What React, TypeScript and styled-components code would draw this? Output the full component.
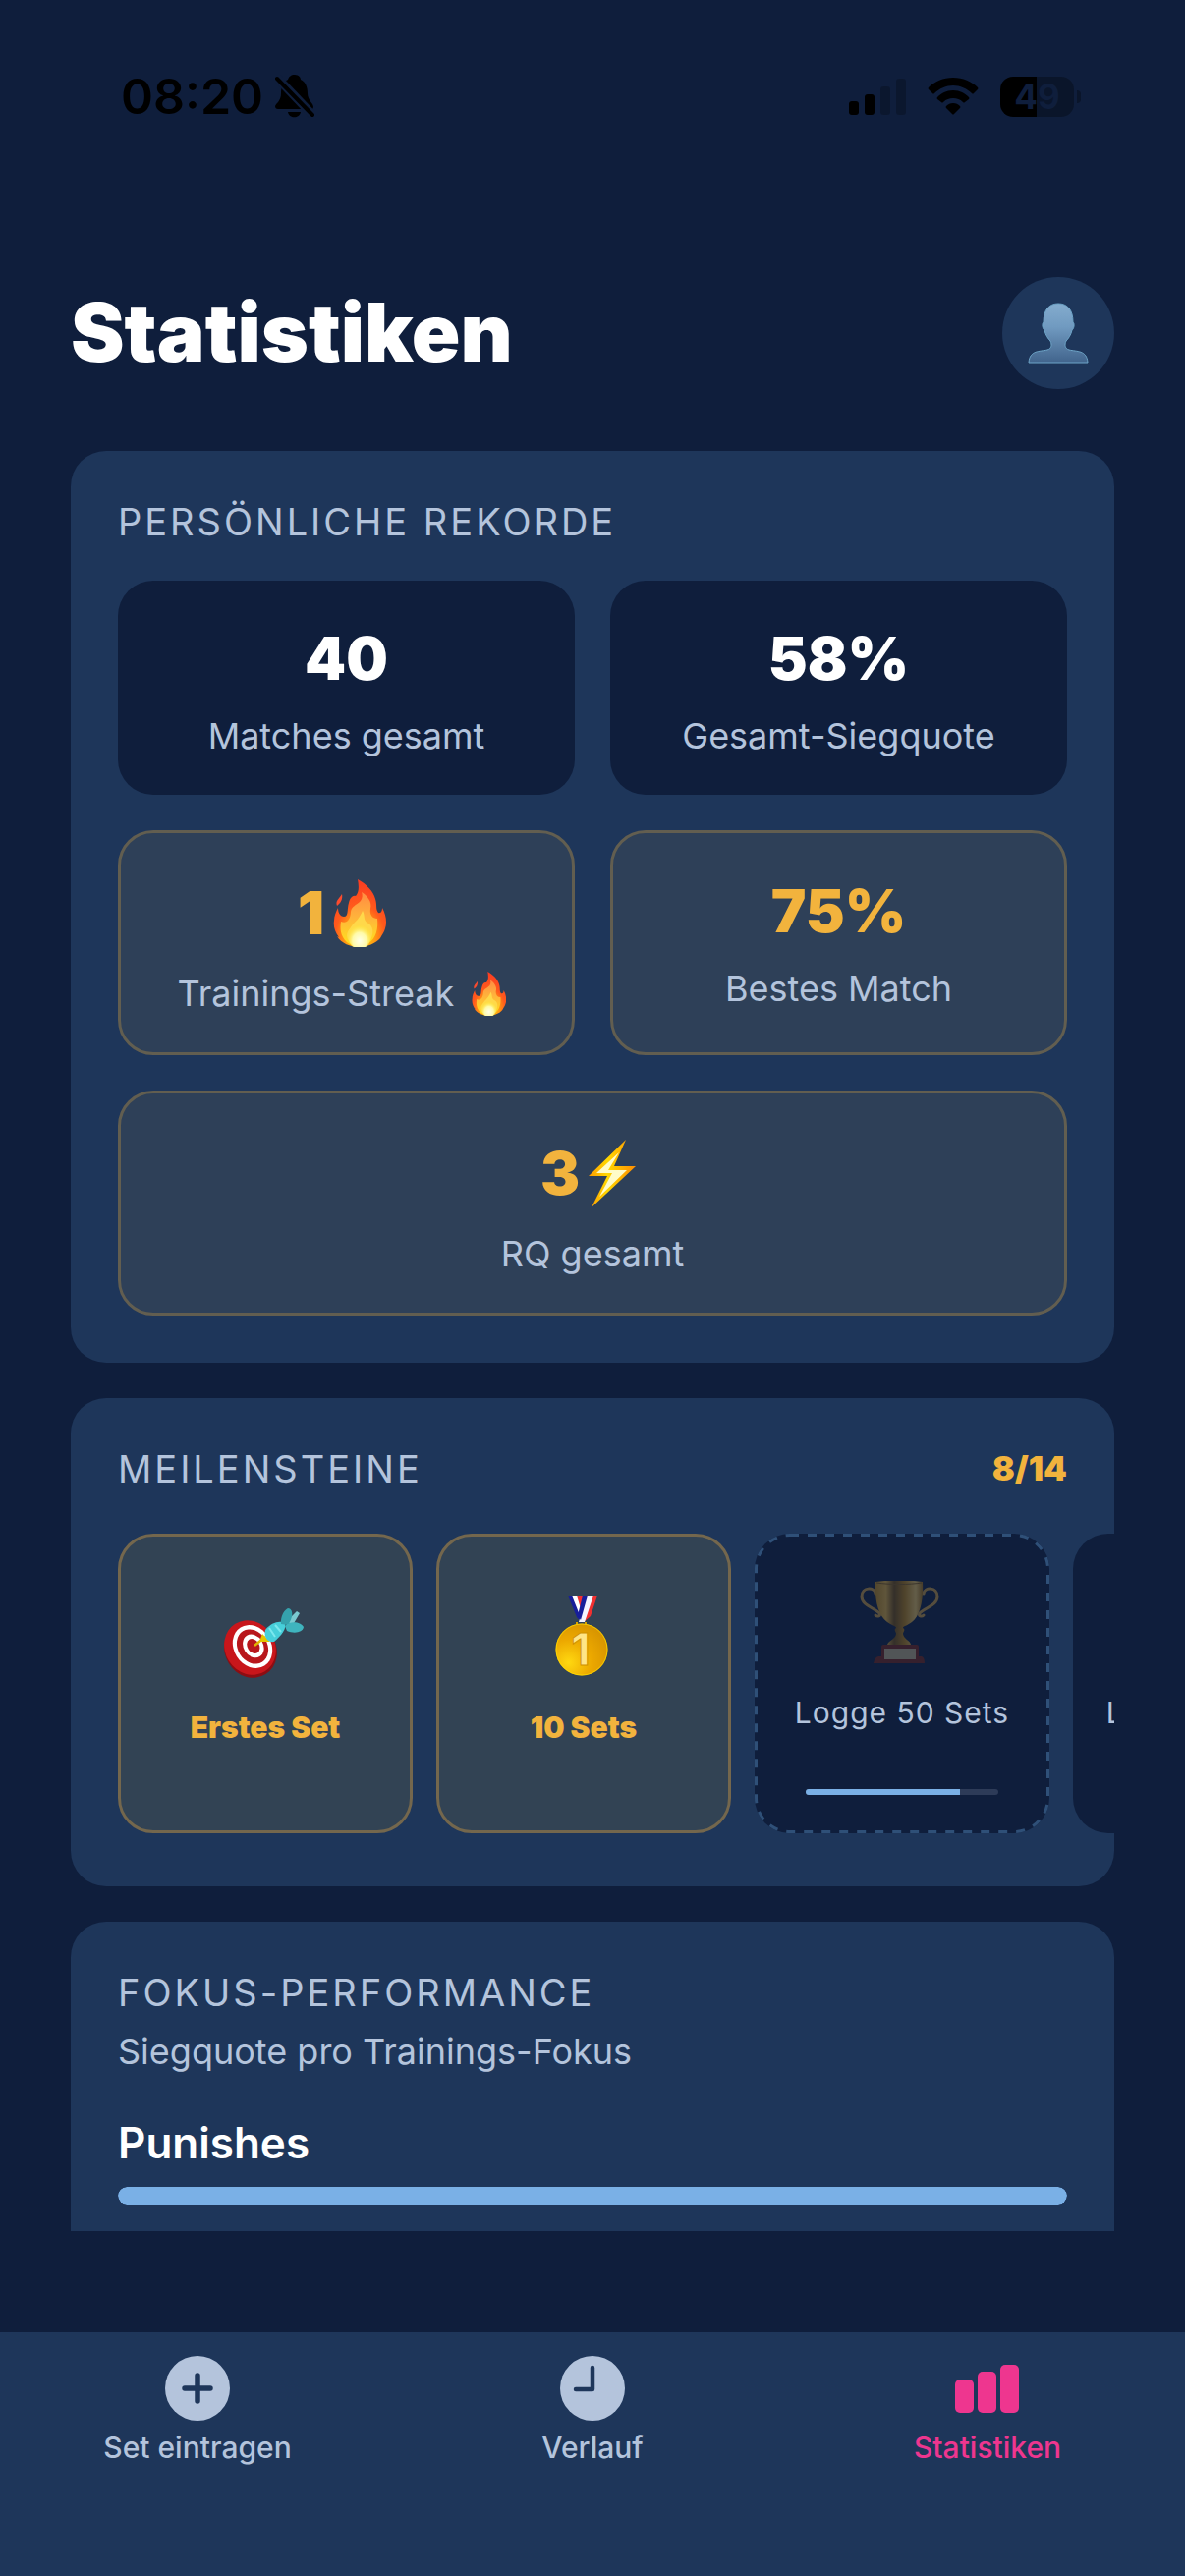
import * as React from "react";
import styled, { createGlobalStyle } from "styled-components";

const { useState } = React;

type TabId = "entry" | "history" | "stats";
type EmojiName = "flame" | "bolt" | "dart" | "medal" | "trophy";

interface RecordItem {
  value: string;
  label: string;
  valueEmoji?: EmojiName;
  labelEmoji?: EmojiName;
  highlight?: boolean;
  wide?: boolean;
}

interface Milestone {
  label: string;
  emoji: EmojiName;
  progress?: number;
  next?: boolean;
}

const records: RecordItem[] = [
  { value: "40", label: "Matches gesamt" },
  { value: "58%", label: "Gesamt-Siegquote" },
  {
    value: "1",
    label: "Trainings-Streak",
    valueEmoji: "flame",
    labelEmoji: "flame",
    highlight: true,
  },
  { value: "75%", label: "Bestes Match", highlight: true },
  {
    value: "3",
    label: "RQ gesamt",
    valueEmoji: "bolt",
    highlight: true,
    wide: true,
  },
];

const milestones: Milestone[] = [
  { label: "Erstes Set", emoji: "dart" },
  { label: "10 Sets", emoji: "medal" },
  { label: "Logge 50 Sets", emoji: "trophy", progress: 80, next: true },
  { label: "Logge 100 Sets", emoji: "trophy", progress: 40 },
];

const Flame: React.FC<{ height: number }> = ({ height }) => (
  <svg height={height} viewBox="0 0 54 69" aria-hidden="true">
    <defs>
      <radialGradient id="flameOuter" cx="0.5" cy="0.85" r="0.85">
        <stop offset="0" stopColor="#ffd21a" />
        <stop offset="0.32" stopColor="#ffa012" />
        <stop offset="0.56" stopColor="#ff5a1c" />
        <stop offset="1" stopColor="#fb3a22" />
      </radialGradient>
      <linearGradient id="flameInner" x1="0" y1="0" x2="0" y2="1">
        <stop offset="0" stopColor="#ff8a42" />
        <stop offset="0.45" stopColor="#ffb23c" />
        <stop offset="1" stopColor="#ffe21c" />
      </linearGradient>
      <radialGradient id="flameCore" cx="0.5" cy="0.7" r="0.6">
        <stop offset="0" stopColor="#ffffe8" />
        <stop offset="0.5" stopColor="#fffaa8" />
        <stop offset="1" stopColor="#ffe81a" stopOpacity="0" />
      </radialGradient>
    </defs>
    <path
      fill="url(#flameOuter)"
      d="M25 0C34 5 41 12 43 20C45 26 43 30 46 34C49 35 50 32 50 29C54 36 55 44 53 50C52 54 50 56 48 60C44 65 34 69 26 69C18 69 8 65 4 58L6 59C2 54 0 48 1 42C1 37 3 33 5 29C5 35 8 38 11 38C16 38 14 30 16 24C17 19 20 16 23 17C27 12 26 6 25 0Z"
    />
    <path fill="#fb4b2e" d="M9 15C10 20 8 24 4 27C2 22 6 20 9 15Z" />
    <path
      fill="url(#flameInner)"
      d="M29 13C35 17 40 23 38 30C37 36 40 40 45 40C46 50 44 60 36 65C30 69 20 69 14 64C7 57 7 50 8 43C14 46 18 40 18 33C19 27 23 27 28 22C30 19 30 16 29 13Z"
    />
    <path
      fill="#ffd84a"
      d="M30 32C33 37 30 42 36 45C43 49 41 61 34 66C28 69 20 68 16 63C11 55 17 51 20 46C24 42 27 39 30 32Z"
    />
    <ellipse cx="27" cy="57" rx="12" ry="14" fill="url(#flameCore)" />
  </svg>
);

const Bolt: React.FC<{ height: number }> = ({ height }) => (
  <svg height={height} viewBox="0 0 48 69" aria-hidden="true">
    <defs>
      <linearGradient id="boltEdge" x1="0" y1="0" x2="1" y2="0">
        <stop offset="0" stopColor="#ff9a00" />
        <stop offset="0.4" stopColor="#ffd800" />
        <stop offset="1" stopColor="#ff8c00" />
      </linearGradient>
    </defs>
    <path fill="url(#boltEdge)" d="M38 0L0 37H19L3 69L48 27H26Z" />
    <path fill="#fffcc8" d="M31 13L8 34H24L11 58L39 31H20Z" />
  </svg>
);

const Dart: React.FC = () => (
  <svg width="84" height="84" viewBox="0 0 84 84" aria-hidden="true">
    <g transform="translate(0 13)">
      <ellipse
        cx="29"
        cy="42.5"
        rx="26"
        ry="29"
        fill="#8d0d12"
        transform="rotate(-32 29 42.5)"
      />
      <ellipse
        cx="28.5"
        cy="40"
        rx="25.5"
        ry="28.5"
        fill="#c8161b"
        transform="rotate(-32 28.5 40)"
      />
      <g transform="rotate(-32 31 39)">
        <ellipse cx="31" cy="39" rx="19" ry="23" fill="#fff" />
        <ellipse cx="31" cy="39" rx="15" ry="18.5" fill="#b8171c" />
        <ellipse cx="32" cy="39" rx="10" ry="12.5" fill="#fff" />
        <ellipse cx="32" cy="39" rx="6" ry="8" fill="#b8171c" />
      </g>
      <path d="M33 38L44 29" stroke="#e0b400" strokeWidth="2.5" />
      <path fill="#e6c400" d="M41 26L49 34L43 34L38 34Z" />
      <path fill="#47cfda" d="M44 22C50 14 59 12 64 15C66 21 60 28 53 34C47 35 42 30 44 22Z" />
      <path d="M48 20L54 29M54 17L60 24" stroke="#7be8ee" strokeWidth="2" />
      <path fill="#7bc9d0" d="M65 14L76 3L79 5L72 17Z" />
      <path fill="#35a2ad" d="M60 16C59 8 64 0 68 0C73 2 72 10 67 17Z" />
      <path fill="#3fb4be" d="M64 18C70 12 80 14 83 19C82 25 73 26 66 23Z" />
    </g>
  </svg>
);

const Medal: React.FC = () => (
  <svg width="54" height="84" viewBox="0 0 54 84" aria-hidden="true">
    <defs>
      <radialGradient id="medalFace" cx="0.25" cy="0.75" r="0.8">
        <stop offset="0" stopColor="#ffd810" />
        <stop offset="0.55" stopColor="#eca800" />
        <stop offset="1" stopColor="#d99600" />
      </radialGradient>
    </defs>
    <path fill="#f23030" d="M22 0H29L27 26Z" />
    <path fill="#171e9a" d="M13 0H18L27 21V28L22 22Z" />
    <path fill="#fff" d="M17 0H22L28 20L27 25Z" />
    <path fill="#f23030" d="M38 0H43L36 21L29 27Z" />
    <path fill="#f4f4ff" d="M32 0H39L30 27H24Z" />
    <path fill="#171e9a" d="M28 0H33L26 25L23 20Z" />
    <path d="M22 27V31M31 27V31" stroke="#d8a400" strokeWidth="2" />
    <circle cx="27" cy="55" r="26.5" fill="url(#medalFace)" />
    <circle cx="27" cy="55" r="26" fill="none" stroke="#ffe000" strokeOpacity="0.7" />
    <text
      x="26"
      y="71"
      fill="#ffe587"
      stroke="#d19200"
      strokeWidth="1"
      fontSize="45"
      fontWeight="700"
      textAnchor="middle"
    >
      1
    </text>
  </svg>
);

const Trophy: React.FC = () => (
  <svg width="82" height="84" viewBox="0 0 82 84" aria-hidden="true">
    <defs>
      <linearGradient id="trophyCup" x1="0" y1="0" x2="1" y2="0">
        <stop offset="0" stopColor="#b58418" />
        <stop offset="0.22" stopColor="#d8a83a" />
        <stop offset="0.4" stopColor="#6c4a10" />
        <stop offset="0.62" stopColor="#b07c14" />
        <stop offset="0.85" stopColor="#e0bc5c" />
        <stop offset="1" stopColor="#98680f" />
      </linearGradient>
    </defs>
    <path
      fill="none"
      stroke="#bf9440"
      strokeWidth="3"
      strokeLinecap="round"
      d="M16 13C15 6 2 6 2 16C2 25 14 27 20 33C22 36 18 37 16 35M65 13C66 6 79 6 79 16C79 25 67 27 61 33C59 36 63 37 65 35"
    />
    <path
      fill="url(#trophyCup)"
      d="M16 1C28 -1 52 -1 64 1C65 18 62 35 53 42C48 46 44 46 44 48C47 50 44 52 44 54C45 60 51 60 52 65H28C30 60 36 60 37 54C37 52 34 50 37 48C37 46 32 45 28 42C18 35 15 18 16 1Z"
    />
    <path d="M17 2C30 4 51 4 63 2" fill="none" stroke="#7c5818" strokeWidth="1" />
    <path fill="#702418" d="M22 67Q22 65 24 65H58Q60 65 60 67V77H63Q66 78 66 84H14Q15 78 19 77H22Z" />
    <path fill="#b5a880" d="M25 69H57V80H25Z" />
  </svg>
);

const Emoji: React.FC<{ name: EmojiName; height?: number }> = ({
  name,
  height = 84,
}) => {
  if (name === "flame") return <Flame height={height} />;
  if (name === "bolt") return <Bolt height={height} />;
  if (name === "dart") return <Dart />;
  if (name === "medal") return <Medal />;
  return <Trophy />;
};

const BellOff: React.FC = () => (
  <svg width="40" height="44" viewBox="0 0 40 44" aria-hidden="true">
    <path d="M20 0C24 0 26 3 26 5C31 7 33 13 33 19C33 26 39 29 39 33Q39 35 37 35H3Q0 35 0 32C1 29 6 27 6 19C6 13 8 7 13 5C14 2 16 0 20 0ZM13 38H26C25 45 14 45 13 38Z" />
    <path d="M-1 0L41 44" stroke="#0f1e3c" strokeWidth="9" />
    <path d="M2 4L38 41" stroke="#000" strokeWidth="4" strokeLinecap="round" />
  </svg>
);

const Signal: React.FC = () => (
  <svg width="58" height="38" viewBox="0 0 58 38" aria-hidden="true">
    <rect x="0" y="24" width="10" height="14" rx="3" />
    <rect x="16" y="17" width="10" height="21" rx="3" />
    <rect x="32" y="9" width="10" height="29" rx="3" opacity="0.22" />
    <rect x="48" y="1" width="10" height="37" rx="3" opacity="0.22" />
  </svg>
);

const Wifi: React.FC = () => (
  <svg width="52" height="38" viewBox="0 0 52 38" aria-hidden="true">
    <path d="M26 0C36 0 45 4 51 10Q52 11 51 12L47 16Q46 17 45 16C40 11 33 8 26 8C19 8 12 11 7 16Q6 17 5 16L1 12Q0 11 1 10C7 4 16 0 26 0Z" />
    <path d="M26 13C33 13 38 16 42 20Q43 21 42 22L38 25Q37 26 36 25C33 22 30 21 26 21C22 21 19 22 16 25Q15 26 14 25L10 22Q9 21 10 20C14 16 19 13 26 13Z" />
    <path d="M26 26C29 26 31 27 33 29Q34 30 33 31L27 37Q26 38 25 37L19 31Q18 30 19 29C21 27 23 26 26 26Z" />
  </svg>
);

const Person: React.FC = () => (
  <svg width="62" height="62" viewBox="0 0 62 62" aria-hidden="true">
    <defs>
      <linearGradient id="person" x1="0" y1="0" x2="0" y2="1">
        <stop offset="0" stopColor="#84acce" />
        <stop offset="0.4" stopColor="#709ac0" />
        <stop offset="1" stopColor="#41648c" />
      </linearGradient>
    </defs>
    <path
      fill="url(#person)"
      stroke="#6ea5c8"
      strokeWidth="1"
      d="M31 1C40 1 46 7 46 20C48 21 47 27 45 28C44 33 41 37 39 39C37 43 38 47 42 48C50 50 60 48 61 61H1C2 48 12 50 20 48C24 47 25 43 23 39C21 37 18 33 17 28C15 27 14 21 16 20C16 7 22 1 31 1Z"
    />
  </svg>
);

const PlusIcon: React.FC = () => (
  <svg width="66" height="66" viewBox="0 0 66 66" aria-hidden="true">
    <circle cx="33" cy="33" r="33" fill="currentColor" />
    <path
      d="M33 20V46M20 33H46"
      stroke="#1e365a"
      strokeWidth="5.5"
      strokeLinecap="round"
    />
  </svg>
);

const ClockIcon: React.FC = () => (
  <svg width="66" height="66" viewBox="0 0 66 66" aria-hidden="true">
    <circle cx="33" cy="33" r="33" fill="currentColor" />
    <path
      d="M33 12V34H16"
      fill="none"
      stroke="#1e365a"
      strokeWidth="4.5"
      strokeLinecap="round"
      strokeLinejoin="round"
    />
  </svg>
);

const BarsIcon: React.FC = () => (
  <svg width="66" height="66" viewBox="0 0 66 66" fill="currentColor" aria-hidden="true">
    <rect x="0" y="24" width="19" height="34" rx="5" />
    <rect x="23" y="16" width="19" height="42" rx="5" />
    <rect x="46" y="9" width="19" height="49" rx="5" />
  </svg>
);

const tabs: { id: TabId; label: string; Icon: React.FC }[] = [
  { id: "entry", label: "Set eintragen", Icon: PlusIcon },
  { id: "history", label: "Verlauf", Icon: ClockIcon },
  { id: "stats", label: "Statistiken", Icon: BarsIcon },
];

const App: React.FC = () => {
  const [activeTab, setActiveTab] = useState<TabId>("stats");

  return (
    <Screen>
      <GlobalStyle />
      <StatusBar>
        <Clock>
          08:20
          <BellOff />
        </Clock>
        <Indicators>
          <Signal />
          <Wifi />
          <Battery>
            <BatteryBody>49</BatteryBody>
            <BatteryTip />
          </Battery>
        </Indicators>
      </StatusBar>

      <Content>
        <Header>
          <Title>Statistiken</Title>
          <Avatar type="button" aria-label="Profil">
            <Person />
          </Avatar>
        </Header>

        <Card>
          <CardTitle>Persönliche Rekorde</CardTitle>
          <RecordGrid>
            {records.map((item) => (
              <RecordTile
                key={item.label}
                $highlight={item.highlight}
                $wide={item.wide}
              >
                <RecordValue
                  $highlight={item.highlight}
                  $tall={Boolean(item.valueEmoji)}
                >
                  {item.value}
                  {item.valueEmoji && <Emoji name={item.valueEmoji} height={69} />}
                </RecordValue>
                <RecordLabel>
                  {item.label}
                  {item.labelEmoji && <Emoji name={item.labelEmoji} height={45} />}
                </RecordLabel>
              </RecordTile>
            ))}
          </RecordGrid>
        </Card>

        <Card>
          <CardHeader>
            <CardTitle>Meilensteine</CardTitle>
            <Counter>8/14</Counter>
          </CardHeader>
          <MilestoneList>
            {milestones.map((item) => {
              const locked = item.progress !== undefined;
              return (
                <MilestoneTile key={item.label} $locked={locked}>
                  {item.next && (
                    <DashedFrame aria-hidden="true">
                      <rect x="1.5" y="1.5" width="297" height="302" rx="34.5" />
                    </DashedFrame>
                  )}
                  <MilestoneEmoji $locked={locked}>
                    <Emoji name={item.emoji} />
                  </MilestoneEmoji>
                  <MilestoneLabel $locked={locked}>{item.label}</MilestoneLabel>
                  {locked && (
                    <MilestoneTrack>
                      <MilestoneFill style={{ width: `${item.progress}%` }} />
                    </MilestoneTrack>
                  )}
                </MilestoneTile>
              );
            })}
          </MilestoneList>
        </Card>

        <FocusCard>
          <CardTitle>Fokus-Performance</CardTitle>
          <Subtitle>Siegquote pro Trainings-Fokus</Subtitle>
          <FocusName>Punishes</FocusName>
          <FocusTrack>
            <FocusFill style={{ width: "100%" }} />
          </FocusTrack>
        </FocusCard>
      </Content>

      <TabBar>
        {tabs.map(({ id, label, Icon }) => (
          <Tab
            key={id}
            type="button"
            $active={id === activeTab}
            onClick={() => setActiveTab(id)}
          >
            <Icon />
            {label}
          </Tab>
        ))}
      </TabBar>
    </Screen>
  );
};

const GlobalStyle = createGlobalStyle`
  * {
    box-sizing: border-box;
  }
  body {
    margin: 0;
    background: #0f1e3c;
    font-family: Inter, "Liberation Sans", sans-serif;
  }
  h1, h2, h3, p, ul {
    margin: 0;
    padding: 0;
  }
  button {
    border: 0;
    padding: 0;
    font-family: inherit;
    cursor: pointer;
  }
  svg {
    display: block;
    flex-shrink: 0;
  }
`;

const Screen = styled.div`
  display: flex;
  flex-direction: column;
  height: 100vh;
  background: #0f1e3c;
`;

const StatusBar = styled.div`
  display: flex;
  flex-shrink: 0;
  justify-content: space-between;
  align-items: center;
  height: 196px;
  padding: 0 106px 0 123px;
  color: #000;
`;

const Clock = styled.div`
  display: flex;
  align-items: center;
  gap: 12px;
  font-size: 50px;
  font-weight: 600;
`;

const Indicators = styled.div`
  display: flex;
  align-items: center;
  gap: 22px;
`;

const Battery = styled.div`
  display: flex;
  align-items: center;
  gap: 3px;
`;

const BatteryBody = styled.div`
  width: 75px;
  border-radius: 13px;
  background: linear-gradient(90deg, #000 49%, #0a152a 49%);
  color: #0f1e3c;
  font-size: 35px;
  font-weight: 700;
  line-height: 41px;
  text-align: center;
`;

const BatteryTip = styled.div`
  width: 4px;
  height: 13px;
  border-radius: 0 4px 4px 0;
  background: #0a152a;
`;

const Content = styled.main`
  display: flex;
  flex: 1;
  flex-direction: column;
  gap: 36px;
  min-height: 0;
  margin-bottom: 103px;
  padding: 86px 72px 0;
  overflow: hidden;
`;

const Header = styled.header`
  display: flex;
  flex-shrink: 0;
  justify-content: space-between;
  align-items: center;
  margin-bottom: 27px;
`;

const Title = styled.h1`
  color: #fff;
  font-size: 82px;
  font-weight: 900;
  line-height: 96px;
`;

const Avatar = styled.button`
  display: flex;
  justify-content: center;
  align-items: center;
  width: 114px;
  height: 114px;
  border-radius: 50%;
  background: #1e365a;
`;

const Card = styled.section`
  flex-shrink: 0;
  padding: 48px;
  border-radius: 36px;
  background: #1e365a;
  overflow: hidden;
`;

const FocusCard = styled(Card)`
  padding-bottom: 96px;
`;

const CardHeader = styled.div`
  display: flex;
  justify-content: space-between;
  align-items: center;
`;

const CardTitle = styled.h2`
  color: #b4c4dc;
  font-size: 38px;
  font-weight: 400;
  line-height: 48px;
  letter-spacing: 3px;
  text-transform: uppercase;
`;

const Counter = styled.span`
  color: #f2b33d;
  font-size: 34px;
  font-weight: 900;
  line-height: 48px;
`;

const RecordGrid = styled.div`
  display: grid;
  grid-template-columns: 1fr 1fr;
  gap: 36px;
  margin-top: 36px;
`;

const RecordTile = styled.div<{ $highlight?: boolean; $wide?: boolean }>`
  display: flex;
  flex-direction: column;
  align-items: center;
  grid-column: ${({ $wide }) => ($wide ? "1 / -1" : "auto")};
  gap: 12px;
  padding: 36px;
  border: ${({ $highlight }) => ($highlight ? "3px solid #625e50" : "0")};
  border-radius: 36px;
  background: ${({ $highlight }) => ($highlight ? "#2e4058" : "#0f1e3c")};
`;

const RecordValue = styled.div<{ $highlight?: boolean; $tall: boolean }>`
  display: flex;
  align-items: center;
  gap: 9px;
  color: ${({ $highlight }) => ($highlight ? "#f2b33d" : "#fff")};
  font-size: 60px;
  font-weight: 900;
  line-height: ${({ $tall }) => ($tall ? 91 : 86)}px;

  svg {
    margin-right: 9px;
  }
`;

const RecordLabel = styled.div`
  display: flex;
  align-items: center;
  gap: 18px;
  color: #b4c4dc;
  font-size: 36px;
  line-height: 48px;
  white-space: nowrap;

  svg {
    margin-right: 9px;
  }
`;

const MilestoneList = styled.ul`
  display: flex;
  gap: 24px;
  margin: 36px -48px 0 0;
  padding: 6px 0;
  list-style: none;
  overflow: hidden;
`;

const MilestoneTile = styled.li<{ $locked: boolean }>`
  position: relative;
  display: flex;
  flex: 0 0 300px;
  flex-direction: column;
  align-items: center;
  height: 305px;
  padding: ${({ $locked }) => ($locked ? 45 : 60)}px 12px 36px;
  border: 3px solid ${({ $locked }) => ($locked ? "transparent" : "#74674d")};
  border-radius: 36px;
  background-color: ${({ $locked }) => ($locked ? "#0f1e3c" : "#324354")};
`;

// css dashes are too short at this border width
const DashedFrame = styled.svg`
  position: absolute;
  top: -3px;
  left: -3px;
  width: 300px;
  height: 305px;
  fill: none;
  stroke: #2f5078;
  stroke-width: 3px;
  stroke-dasharray: 9 9;
`;

const MilestoneEmoji = styled.div<{ $locked: boolean }>`
  padding-right: 4px;
  opacity: ${({ $locked }) => ($locked ? 0.4 : 1)};
`;

const MilestoneLabel = styled.div<{ $locked: boolean }>`
  margin-top: 30px;
  color: ${({ $locked }) => ($locked ? "#b4c4dc" : "#f2b33d")};
  font-size: 30px;
  font-weight: ${({ $locked }) => ($locked ? 400 : 900)};
  line-height: 40px;
  letter-spacing: ${({ $locked }) => ($locked ? 1 : 0)}px;
  white-space: nowrap;
`;

const MilestoneTrack = styled.div`
  width: 196px;
  height: 6px;
  margin-top: auto;
  border-radius: 3px;
  background: #2d3b58;
  overflow: hidden;
`;

const MilestoneFill = styled.div`
  height: 100%;
  background: #7ab0e6;
`;

const Subtitle = styled.p`
  margin-top: 12px;
  color: #b4c4dc;
  font-size: 36px;
  line-height: 48px;
`;

const FocusName = styled.h3`
  margin-top: 42px;
  color: #fff;
  font-size: 44px;
  font-weight: 600;
  line-height: 54px;
`;

const FocusTrack = styled.div`
  height: 18px;
  margin-top: 18px;
  border-radius: 9px;
  background: #0f1e3c;
  overflow: hidden;
`;

const FocusFill = styled.div`
  height: 100%;
  border-radius: 9px;
  background: #7ab0e6;
`;

const TabBar = styled.nav`
  display: grid;
  flex-shrink: 0;
  grid-template-columns: repeat(3, 1fr);
  height: 248px;
  padding-top: 24px;
  background: #1e365a;
`;

const Tab = styled.button<{ $active: boolean }>`
  display: flex;
  flex-direction: column;
  align-items: center;
  align-self: start;
  gap: 9px;
  background: none;
  color: ${({ $active }) => ($active ? "#ee368f" : "#b4c4dc")};
  font-size: 30px;
  font-weight: 500;
  line-height: 36px;
`;

export default App;
